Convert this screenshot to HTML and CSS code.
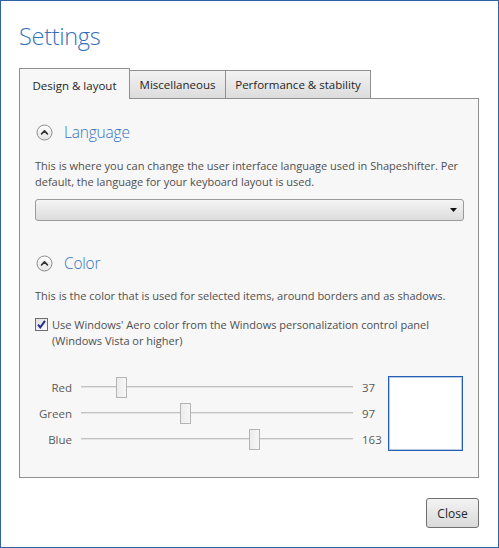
FILE: index.html
```html
<!DOCTYPE html>
<html lang="en">
<head>
<meta charset="utf-8">
<title>Settings</title>
<link rel="stylesheet" href="styles.css">
</head>
<body>
<div class="window">
  <h1 class="title">Settings</h1>
  <div class="tabs">
    <div class="tab tab-design is-active">Design &amp; layout</div>
    <div class="tab tab-misc">Miscellaneous</div>
    <div class="tab tab-perf">Performance &amp; stability</div>
  </div>
  <div class="panel">
    <section class="section">
      <div class="sec-head">
        <span class="expander">
          <svg width="17" height="17" viewBox="0 0 17 17">
            <defs>
              <linearGradient id="eg1" x1="0" y1="0" x2="0" y2="1">
                <stop offset="0" stop-color="#ffffff"/>
                <stop offset="1" stop-color="#e4e4e4"/>
              </linearGradient>
            </defs>
            <circle cx="8.5" cy="8.5" r="7.5" fill="url(#eg1)" stroke="#8c8c8c" stroke-width="1"/>
            <path d="M5.6 9.8 L8.5 6.9 L11.4 9.8" fill="none" stroke="#333" stroke-width="1.7" stroke-linecap="round" stroke-linejoin="round"/>
          </svg>
        </span>
        <span class="sec-title">Language</span>
      </div>
      <p class="desc">This is where you can change the user interface language used in Shapeshifter. Per<br>default, the language for your keyboard layout is used.</p>
      <div class="select">
        <svg class="select-arrow" width="7" height="4" viewBox="0 0 7 4"><path d="M0 0 H7 L3.5 4 Z" fill="#111"/></svg>
      </div>
    </section>

    <section class="section section-color">
      <div class="sec-head">
        <span class="expander">
          <svg width="17" height="17" viewBox="0 0 17 17">
            <defs>
              <linearGradient id="eg2" x1="0" y1="0" x2="0" y2="1">
                <stop offset="0" stop-color="#ffffff"/>
                <stop offset="1" stop-color="#e4e4e4"/>
              </linearGradient>
            </defs>
            <circle cx="8.5" cy="8.5" r="7.5" fill="url(#eg2)" stroke="#8c8c8c" stroke-width="1"/>
            <path d="M5.6 9.8 L8.5 6.9 L11.4 9.8" fill="none" stroke="#333" stroke-width="1.7" stroke-linecap="round" stroke-linejoin="round"/>
          </svg>
        </span>
        <span class="sec-title">Color</span>
      </div>
      <p class="desc">This is the color that is used for selected items, around borders and as shadows.</p>
      <div class="check">
        <span class="check-box">
          <svg width="13" height="13" viewBox="0 0 13 13">
            <defs>
              <linearGradient id="cg" x1="0" y1="0" x2="1" y2="1">
                <stop offset="0" stop-color="#dcdcdc"/>
                <stop offset="1" stop-color="#ffffff"/>
              </linearGradient>
            </defs>
            <rect x="0.5" y="0.5" width="12" height="12" fill="url(#cg)" stroke="#6f6f6f"/>
            <path d="M3 6.6 L5.3 9.4 L10 2.8" fill="none" stroke="#26318f" stroke-width="2"/>
          </svg>
        </span>
        <span class="check-text">Use Windows' Aero color from the Windows personalization control panel<br>(Windows Vista or higher)</span>
      </div>
      <div class="color-row">
        <div class="sliders">
          <div class="srow">
            <span class="slabel">Red</span>
            <div class="track"><span class="thumb" style="left:35px"></span></div>
            <span class="sval">37</span>
          </div>
          <div class="srow">
            <span class="slabel">Green</span>
            <div class="track"><span class="thumb" style="left:99px"></span></div>
            <span class="sval">97</span>
          </div>
          <div class="srow">
            <span class="slabel">Blue</span>
            <div class="track"><span class="thumb" style="left:168px"></span></div>
            <span class="sval">163</span>
          </div>
        </div>
        <div class="swatch"></div>
      </div>
    </section>
  </div>
  <div class="footer">
    <button class="btn" type="button">Close</button>
  </div>
</div>
</body>
</html>
```

FILE: styles.css
```css
html, body {
  margin: 0;
  padding: 0;
  background: #ffffff;
}

body {
  font-family: "Open Sans", "Noto Sans", sans-serif;
  color: #4a4a4a;
}

.window {
  box-sizing: border-box;
  width: 499px;
  height: 548px;
  border: 1px solid #2f63a8;
  padding: 20px 19px 0 18px;
  background: #ffffff;
}

.title {
  margin: 0;
  height: 30px;
  font-size: 23.5px;
  line-height: 31px;
  font-weight: 300;
  letter-spacing: -0.3px;
  color: #3470bd;
}

/* Tabs */
.tabs {
  display: flex;
  align-items: flex-end;
  margin-top: 17px;
  margin-bottom: -1px;
  height: 31px;
  position: relative;
  z-index: 1;
}

.tab {
  box-sizing: border-box;
  display: flex;
  align-items: center;
  justify-content: center;
  height: 29px;
  border: 1px solid #8e8f91;
  background: linear-gradient(#f3f3f3, #dcdcdc);
  font-size: 11.5px;
  color: #262626;
  white-space: nowrap;
}

.tab.is-active {
  height: 31px;
  border-bottom: none;
  background: #f7f7f7;
  padding-top: 2px;
}

.tab-design { width: 111px; }
.tab-misc { width: 97px; margin-left: -1px; }
.tab-perf { width: 146px; margin-left: -1px; }

/* Panel */
.panel {
  border: 1px solid #8e8f91;
  background: #f7f7f7;
  padding: 22px 14px 25px 15px;
}

.section-color {
  margin-top: 31px;
}

.sec-head {
  display: flex;
  align-items: center;
  height: 22px;
}

.expander {
  display: flex;
  width: 17px;
  height: 17px;
  margin-left: 1px;
}

.sec-title {
  margin-left: 11px;
  font-size: 15.5px;
  font-weight: 300;
  letter-spacing: -0.2px;
  color: #3673bf;
  line-height: 22px;
}

.desc {
  margin: 15px 0 0 0;
  font-size: 11px;
  line-height: 16px;
  white-space: nowrap;
  color: #4f4f4f;
}

.section-color .desc {
  margin-top: 14px;
}

.select {
  box-sizing: border-box;
  position: relative;
  margin-top: 9px;
  height: 22px;
  border: 1px solid #9a9a9a;
  border-radius: 3px;
  background: linear-gradient(#f5f5f5, #dcdcdc);
  display: flex;
  align-items: center;
  justify-content: flex-end;
  padding-right: 6px;
}

/* Checkbox */
.check {
  display: flex;
  align-items: flex-start;
  margin-top: 13px;
  font-size: 11px;
  line-height: 16px;
  white-space: nowrap;
  color: #4f4f4f;
}

.check-box {
  display: flex;
  width: 13px;
  height: 13px;
  margin-top: 1px;
}

.check-text {
  margin-left: 4px;
}

/* Sliders */
.color-row {
  display: flex;
  margin-top: 25px;
}

.sliders {
  width: 353px;
}

.srow {
  display: flex;
  align-items: center;
  height: 26px;
  font-size: 11.5px;
  color: #5a5a5a;
}

.slabel {
  width: 37px;
  text-align: right;
}

.track {
  position: relative;
  width: 272px;
  height: 21px;
  margin-left: 9px;
}

.track::before {
  content: "";
  position: absolute;
  left: 0;
  right: 0;
  top: 9px;
  height: 1px;
  background: #c2c2c2;
  border-bottom: 1px solid #e3e3e3;
}

.thumb {
  position: absolute;
  top: 0;
  box-sizing: border-box;
  width: 11px;
  height: 21px;
  border: 1px solid #b4b4b4;
  background: linear-gradient(90deg, #ececec, #f6f6f6);
}

.sval {
  margin-left: 9px;
}

.swatch {
  box-sizing: border-box;
  width: 75px;
  height: 75px;
  margin-top: 2px;
  border: 1px solid #2360b3;
  box-shadow: inset 0 0 0 1px rgba(35, 96, 179, 0.3), inset 0 0 3px rgba(0, 0, 0, 0.08);
  background: #ffffff;
}

/* Footer */
.footer {
  display: flex;
  justify-content: flex-end;
  margin-top: 20px;
}

.btn {
  box-sizing: border-box;
  width: 53px;
  height: 30px;
  border: 1px solid #707070;
  border-radius: 3px;
  background: linear-gradient(#f3f3f3, #dadada);
  font-family: "Open Sans", "Noto Sans", sans-serif;
  font-size: 12px;
  color: #262626;
  padding: 0;
}
```
